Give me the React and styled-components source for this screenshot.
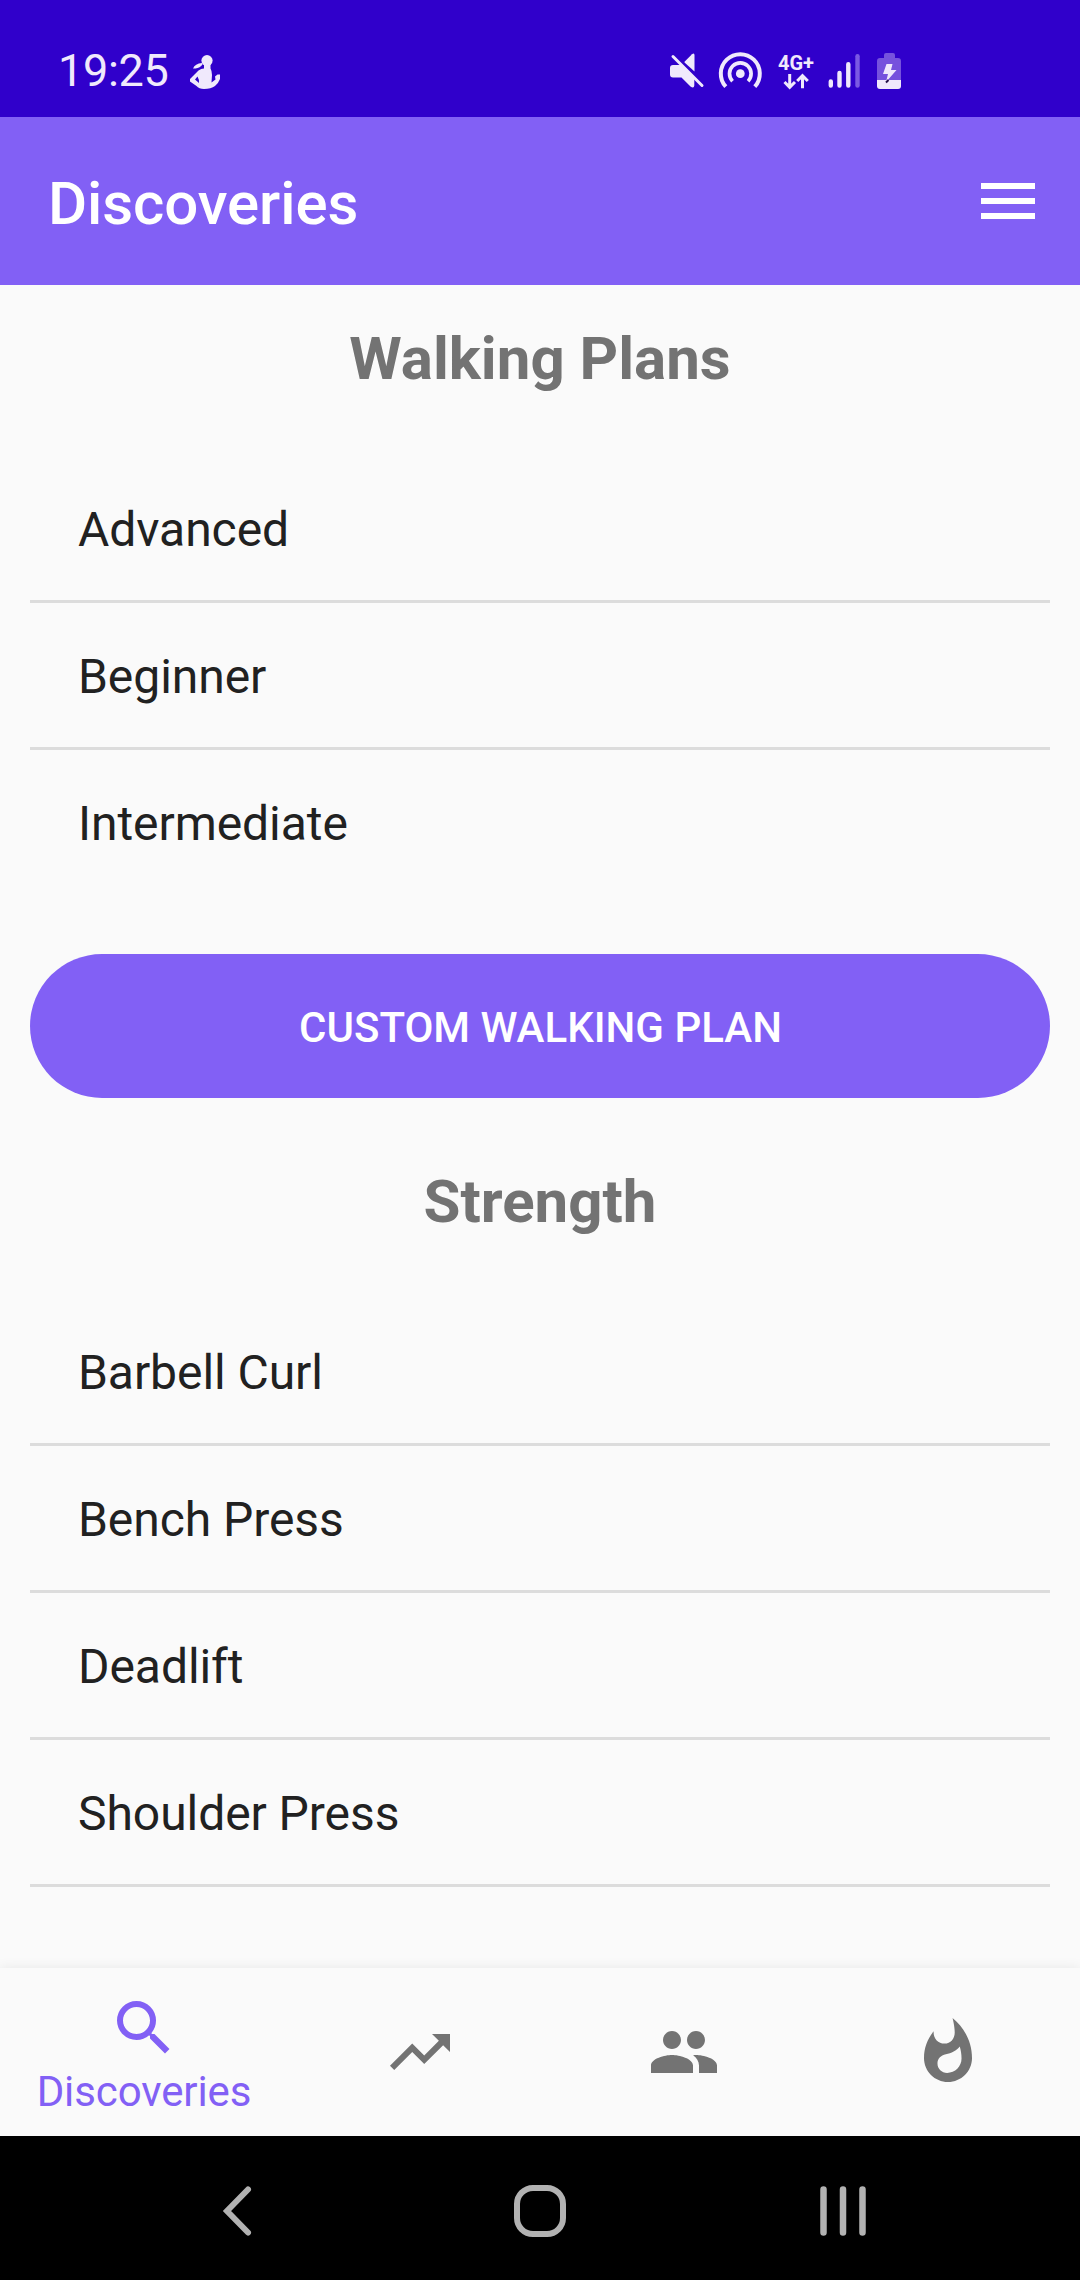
import React from "react";
import styled, { createGlobalStyle } from "styled-components";
import { MdMenu, MdSearch, MdTrendingUp, MdPeople, MdWhatshot } from "react-icons/md";

const GlobalStyle = createGlobalStyle`
  *, *::before, *::after { box-sizing: border-box; }
  html, body { margin: 0; padding: 0; }
  body { background: #fafafa; font-family: Roboto, sans-serif; }
  svg { display: block; flex: none; }
`;

const Screen = styled.div`
  display: flex;
  flex-direction: column;
  width: 1080px;
  height: 2280px;
  overflow: hidden;
  background: #fafafa;
`;

const StatusBar = styled.header`
  display: flex;
  justify-content: space-between;
  flex: none;
  height: 117px;
  padding: 44px 177px 0 58px;
  background: #3000cb;
  color: #f0e9fc;
`;

const StatusGroup = styled.div`
  display: flex;
  align-items: flex-start;
`;

const Clock = styled.time`
  width: 127px;
  font-size: 45px;
  line-height: 53px;
  letter-spacing: -0.3px;
`;

const StatusNotification = styled.div`
  padding: 11px 0 0 5px;
`;

const StatusIndicators = styled.div`
  padding-top: 3px;
`;

const AppBar = styled.div`
  display: flex;
  align-items: center;
  justify-content: space-between;
  flex: none;
  height: 168px;
  padding: 0 36px 0 48px;
  background: #8260f5;
  color: #ffffff;
`;

const AppTitle = styled.h1`
  margin: 0;
  padding-top: 5px;
  font-size: 60px;
  font-weight: 500;
  line-height: 71px;
  letter-spacing: -0.1px;
`;

const IconButton = styled.button`
  display: flex;
  padding: 0;
  border: 0;
  background: none;
  color: inherit;
`;

const Content = styled.main`
  display: flex;
  flex-direction: column;
  flex: 1;
  min-height: 0;
  padding: 0 30px;
  overflow: hidden;
`;

const SectionTitle = styled.h2`
  flex: none;
  margin: 0;
  padding-top: 38px;
  height: 171px;
  color: #737373;
  font-size: 60px;
  font-weight: 700;
  line-height: 71px;
  text-align: center;
`;

const List = styled.ul`
  flex: none;
  margin: 0;
  padding: 0;
  list-style: none;
`;

const ListRow = styled.li`
  display: flex;
  align-items: center;
  height: 147px;
  padding: 3px 48px 0;
  border-bottom: 3px solid #dcdcdc;
  color: #212121;
  font-size: 48px;
  line-height: 57px;
  letter-spacing: -0.06px;

  &:last-child {
    border-bottom-color: ${({ $open }) => ($open ? "#dcdcdc" : "transparent")};
  }
`;

const PrimaryButton = styled.button`
  flex: none;
  height: 144px;
  margin: 57px 0 30px;
  padding: 3px 0 0 1px;
  border: 0;
  border-radius: 72px;
  background: #8260f5;
  color: #ffffff;
  font-family: inherit;
  font-size: 42px;
  font-weight: 500;
  line-height: 49px;
  text-transform: uppercase;
`;

const TabBar = styled.nav`
  display: grid;
  grid-template-columns: 288px repeat(3, 264px);
  flex: none;
  height: 168px;
  background: #fafafa;
  box-shadow: 0 0 12px rgba(0, 0, 0, 0.08);
  z-index: 1;
`;

const Tab = styled.a`
  display: flex;
  flex-direction: column;
  align-items: center;
  justify-content: ${({ $active }) => ($active ? "flex-start" : "center")};
  padding-top: ${({ $active }) => ($active ? 24 : 0)}px;
  color: ${({ $active }) => ($active ? "#8260f5" : "#737373")};
`;

const TabLabel = styled.span`
  margin-top: 3px;
  font-size: 42px;
  line-height: 49px;
  letter-spacing: -0.1px;
`;

const SystemBar = styled.footer`
  display: flex;
  justify-content: space-between;
  align-items: center;
  flex: none;
  height: 144px;
  padding: 6px 207px 0;
  background: #000000;
  color: #b2b2b2;
`;

const RunnerIcon = () => (
  <svg width="30" height="34" viewBox="0 0 30 34" fill="currentColor">
    <circle cx="17" cy="5.6" r="5.6" />
    <path d="M3 13.500Q5 8.500 12 8L12.500 9.500Q10 13 5.500 13.500Z" />
    <path
      fillRule="evenodd"
      d="M8.500 15.500Q11 13.500 14 13.500V8H20.500V13.500Q22 16 22 20L21.500 27.500L25.500 24.500L25 21.500L27.500 19.500H30V24Q28 29 25 31Q21 34 14 34Q9 34 6.500 31L0 26.500V24ZM7.500 21.500L5 24.500L9 28Q9.500 25 7.500 21.500Z"
    />
  </svg>
);

const StatusIcons = () => (
  <svg width="233" height="46" viewBox="0 -6 233 46" fill="none" stroke="currentColor">
    <g fill="currentColor" stroke="none">
      <path d="M14.500 8.700L22 1.200Q24.500 -0.500 24.500 2.500V18.500L14.500 9.500Z" />
      <path d="M3 12H11L24.300 25V32.500Q24 36 20.500 33.500L11.500 24.500H3Q0 24.500 0 21.500V15Q0 12 3 12Z" />
      <circle cx="70.300" cy="20.700" r="4.400" />
    </g>
    <path d="M3 3.500L32 32.500" strokeWidth="3" strokeLinecap="round" />
    <path d="M62.500 28.200A10.800 10.800 0 1 1 78.100 28.200" strokeWidth="3.700" />
    <path d="M55.800 33.700A19.500 19.500 0 1 1 84.800 33.700" strokeWidth="4" />
    <text x="108" y="17" fill="currentColor" stroke="none" fontFamily="Roboto, sans-serif" fontSize="20" fontWeight="700" textLength="36">4G+</text>
    <path d="M119.700 21V34M114.500 29L119.700 34.300L125 29M132.500 35.300V22.500M127.200 28L132.500 22.700L137.800 28" strokeWidth="3" />
    <path d="M160.800 28.500V32.500M169.500 19.900V32.500M178.300 11.200V32.500" strokeWidth="4.400" strokeLinecap="round" />
    <path d="M187.500 3.200V32.500" stroke="#7b59e3" strokeWidth="4.400" strokeLinecap="round" />
    <path d="M216 0H223Q225 0 225 2V5H228Q231 5 231 8V27H207V8Q207 5 210 5H214V2Q214 0 216 0Z" fill="#7652dd" stroke="none" />
    <path d="M207 27H231V33Q231 36 228 36H210Q207 36 207 33Z" fill="currentColor" stroke="none" />
    <path d="M216.500 11L213 21H218L216 29L226.500 17H221L222.500 11Z" fill="currentColor" stroke="none" />
    <path d="M216 29.500L218.500 27" stroke="#241047" strokeWidth="2" />
  </svg>
);

const BackIcon = () => (
  <svg width="64" height="56" viewBox="0 0 64 56" fill="none" stroke="currentColor" strokeWidth="6" strokeLinecap="round">
    <path d="M41 6.500L20 28L41 49.500" />
  </svg>
);

const HomeIcon = () => (
  <svg width="56" height="56" viewBox="0 0 56 56" fill="none" stroke="currentColor" strokeWidth="6">
    <rect x="5" y="5" width="46" height="46" rx="16" />
  </svg>
);

const RecentsIcon = () => (
  <svg width="64" height="56" viewBox="0 0 64 56" stroke="currentColor" strokeWidth="6.500" strokeLinecap="round">
    <path d="M14.500 6.500V49.500M34 6.500V49.500M53.500 6.500V49.500" />
  </svg>
);

const walkingPlans = ["Advanced", "Beginner", "Intermediate"];
const strength = ["Barbell Curl", "Bench Press", "Deadlift", "Shoulder Press"];

const PlanList = ({ items, open }) => (
  <List>
    {items.map((item) => (
      <ListRow key={item} $open={open}>{item}</ListRow>
    ))}
  </List>
);

export default function App() {
  return (
    <>
      <GlobalStyle />
      <Screen>
        <StatusBar>
          <StatusGroup>
            <Clock>19:25</Clock>
            <StatusNotification><RunnerIcon /></StatusNotification>
          </StatusGroup>
          <StatusIndicators><StatusIcons /></StatusIndicators>
        </StatusBar>
        <AppBar>
          <AppTitle>Discoveries</AppTitle>
          <IconButton aria-label="Menu"><MdMenu size={72} /></IconButton>
        </AppBar>
        <Content>
          <SectionTitle>Walking Plans</SectionTitle>
          <PlanList items={walkingPlans} />
          <PrimaryButton>Custom Walking Plan</PrimaryButton>
          <SectionTitle>Strength</SectionTitle>
          <PlanList items={strength} open />
        </Content>
        <TabBar>
          <Tab $active>
            <MdSearch size={72} />
            <TabLabel>Discoveries</TabLabel>
          </Tab>
          <Tab><MdTrendingUp size={72} /></Tab>
          <Tab><MdPeople size={72} /></Tab>
          <Tab><MdWhatshot size={72} /></Tab>
        </TabBar>
        <SystemBar>
          <BackIcon />
          <HomeIcon />
          <RecentsIcon />
        </SystemBar>
      </Screen>
    </>
  );
}
